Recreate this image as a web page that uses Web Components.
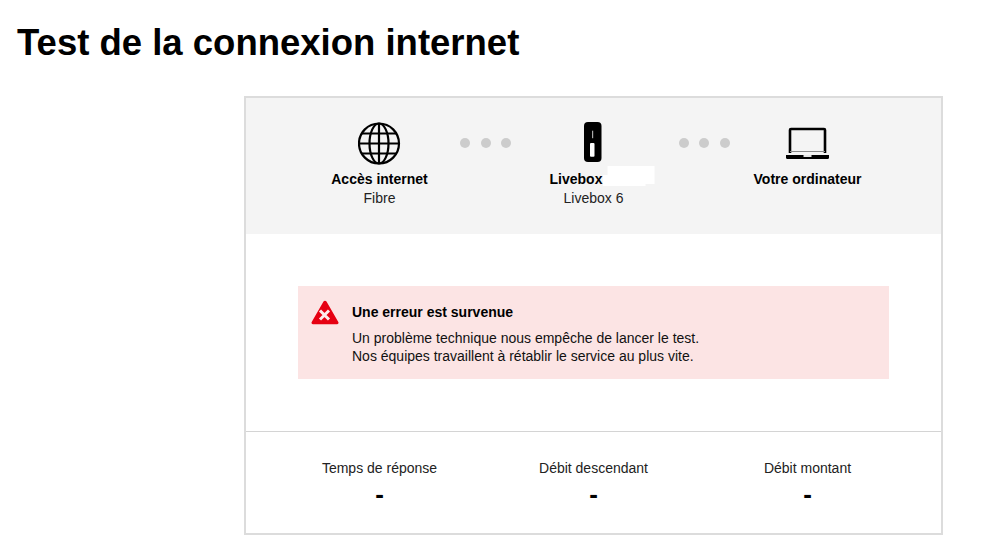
<!DOCTYPE html>
<html lang="fr">
<head>
<meta charset="utf-8">
<title>Test de la connexion internet</title>
<style>
    html, body { margin: 0; padding: 0; background: #fff; }
    body { font-family: "Liberation Sans", Arial, sans-serif; color: #000; }
</style>
</head>
<body>
<speed-test-page>
    <speed-test-card>
        <test-step slot="steps" label="Accès internet" sub="Fibre">
            <svg slot="icon" width="44" height="44" viewBox="0 0 44 44" fill="none" stroke="#000" stroke-width="2.2">
                <circle cx="21" cy="21.500" r="20"/>
                <ellipse cx="21" cy="21.500" rx="9.500" ry="20"/>
                <path d="M21 1.500v40M1 21.500h40M4 11.500h34M4 31.500h34"/>
            </svg>
        </test-step>
        <step-dots slot="steps"></step-dots>
        <test-step slot="steps" label="Livebox" sub="Livebox 6" masked>
            <svg slot="icon" width="44" height="44" viewBox="0 0 44 44">
                <rect x="12" y="0" width="17.500" height="40" rx="4" fill="#000"/>
                <rect x="20" y="8.700" width="1.200" height="7.500" fill="#aaa"/>
                <rect x="18" y="21" width="4.500" height="13.700" rx="1" fill="#fff"/>
            </svg>
        </test-step>
        <step-dots slot="steps" shifted></step-dots>
        <test-step slot="steps" label="Votre ordinateur">
            <svg slot="icon" width="44" height="44" viewBox="0 0 44 44">
                <path d="M4 31V8A1 1 0 0 1 5 7h33A1 1 0 0 1 39 8V31" fill="none" stroke="#000" stroke-width="2.600"/>
                <path d="M4 29.500h35" stroke="#888" stroke-width="1"/>
                <path d="M0 33h43v2.500a1.500 1.500 0 0 1-1.500 1.500H1.500A1.500 1.500 0 0 1 0 35.500z" fill="#000"/>
                <rect x="17.500" y="33" width="8" height="2" fill="#e4e4e4"/>
            </svg>
        </test-step>

        <error-alert slot="body" heading="Une erreur est survenue">
            Un problème technique nous empêche de lancer le test.<br>
            Nos équipes travaillent à rétablir le service au plus vite.
        </error-alert>

        <test-stat slot="stats" label="Temps de réponse" value="-"></test-stat>
        <test-stat slot="stats" label="Débit descendant" value="-"></test-stat>
        <test-stat slot="stats" label="Débit montant" value="-"></test-stat>
    </speed-test-card>
</speed-test-page>

<script>
class SpeedTestPage extends HTMLElement {
    constructor() {
        super();
        this.attachShadow({ mode: 'open' });
    }

    connectedCallback() {
        this.shadowRoot.innerHTML = `
            <style>
                :host { display: block; padding: 0 56px 0 17px; }
                h1 {
                    margin: 0;
                    padding-top: 21px;
                    font-size: 36.500px;
                    line-height: 44px;
                    font-weight: 700;
                }
                .content { display: flex; justify-content: flex-end; padding-top: 31px; }
            </style>
            <h1>Test de la connexion internet</h1>
            <div class="content"><slot></slot></div>
        `;
    }
}

class SpeedTestCard extends HTMLElement {
    constructor() {
        super();
        this.attachShadow({ mode: 'open' });
    }

    connectedCallback() {
        this.shadowRoot.innerHTML = `
            <style>
                :host {
                    display: block;
                    box-sizing: border-box;
                    width: 699px;
                    height: 439px;
                    border: 2px solid #dcdcdc;
                }
                .steps {
                    display: flex;
                    justify-content: center;
                    box-sizing: border-box;
                    height: 136px;
                    padding-top: 24px;
                    background: #f4f4f4;
                }
                .body { padding: 52px 52px 0; height: 145px; }
                .stats {
                    display: flex;
                    justify-content: center;
                    box-sizing: border-box;
                    border-top: 1px solid #d4d4d4;
                    padding-top: 27px;
                }
            </style>
            <div class="steps"><slot name="steps"></slot></div>
            <div class="body"><slot name="body"></slot></div>
            <div class="stats"><slot name="stats"></slot></div>
        `;
    }
}

class TestStep extends HTMLElement {
    constructor() {
        super();
        this.attachShadow({ mode: 'open' });
    }

    connectedCallback() {
        const sub = this.getAttribute('sub') || '';
        // the name of the box is blanked out in the screenshot
        const mask = this.hasAttribute('masked') ? '<span class="mask"></span>' : '';
        this.shadowRoot.innerHTML = `
            <style>
                :host {
                    display: flex;
                    flex-direction: column;
                    align-items: center;
                    width: 134px;
                    font-size: 14px;
                    white-space: nowrap;
                }
                .icon { height: 44px; }
                .label {
                    position: relative;
                    margin-top: 4px;
                    font-weight: 700;
                    line-height: 18px;
                }
                .label.masked { padding-right: 35px; }
                .mask {
                    position: absolute;
                    left: 53px;
                    top: -4px;
                    width: 52px;
                    height: 20px;
                    background: #fff;
                    clip-path: polygon(5px 0, 52px 0, 52px 18px, 43px 18px, 43px 20px, 0 20px, 0 9px, 5px 9px);
                }
                .sub { margin-top: 1px; line-height: 18px; color: #222; }
            </style>
            <div class="icon"><slot name="icon"></slot></div>
            <div class="label ${mask ? 'masked' : ''}">${this.getAttribute('label')}${mask}</div>
            <div class="sub">${sub}</div>
        `;
    }
}

class StepDots extends HTMLElement {
    constructor() {
        super();
        this.attachShadow({ mode: 'open' });
    }

    connectedCallback() {
        this.shadowRoot.innerHTML = `
            <style>
                :host {
                    display: flex;
                    justify-content: center;
                    gap: 10.500px;
                    width: 80px;
                    height: 9px;
                    margin: 16px 1px 0 -1px;
                }
                :host([shifted]) { margin-left: 3.500px; margin-right: -3.500px; }
                i { width: 10px; height: 10px; border-radius: 50%; background: #ccc; }
            </style>
            <i></i><i></i><i></i>
        `;
    }
}

class ErrorAlert extends HTMLElement {
    constructor() {
        super();
        this.attachShadow({ mode: 'open' });
    }

    connectedCallback() {
        this.shadowRoot.innerHTML = `
            <style>
                :host {
                    display: flex;
                    box-sizing: border-box;
                    width: 591px;
                    height: 93px;
                    padding: 13px 13px 0;
                    gap: 13px;
                    background: #fce4e4;
                    font-size: 14px;
                    color: #111;
                }
                svg { flex: none; }
                h2 {
                    margin: 4px 0 8px;
                    font-size: 14px;
                    line-height: 18px;
                    font-weight: 700;
                    color: #000;
                }
                p { margin: 0; line-height: 18px; }
            </style>
            <svg width="28" height="27" viewBox="0 0 28 27">
                <path d="M12.500 2.500a1.800 1.800 0 0 1 3 0L27.300 23a1.500 1.500 0 0 1-1.300 2.300H2A1.500 1.500 0 0 1 .7 23z" fill="#e60012"/>
                <path d="M9 11.500l9 9M18 11.500l-9 9" stroke="#fdecec" stroke-width="3" fill="none"/>
            </svg>
            <div>
                <h2>${this.getAttribute('heading')}</h2>
                <p><slot></slot></p>
            </div>
        `;
    }
}

class TestStat extends HTMLElement {
    constructor() {
        super();
        this.attachShadow({ mode: 'open' });
    }

    connectedCallback() {
        this.shadowRoot.innerHTML = `
            <style>
                :host { display: block; width: 214px; text-align: center; }
                .label { font-size: 14px; line-height: 18px; color: #222; }
                .value { margin-top: 3px; font-size: 26px; line-height: 28px; font-weight: 700; }
            </style>
            <div class="label">${this.getAttribute('label')}</div>
            <div class="value">${this.getAttribute('value')}</div>
        `;
    }
}

window.customElements.define('speed-test-page', SpeedTestPage);
window.customElements.define('speed-test-card', SpeedTestCard);
window.customElements.define('test-step', TestStep);
window.customElements.define('step-dots', StepDots);
window.customElements.define('error-alert', ErrorAlert);
window.customElements.define('test-stat', TestStat);
</script>
</body>
</html>
